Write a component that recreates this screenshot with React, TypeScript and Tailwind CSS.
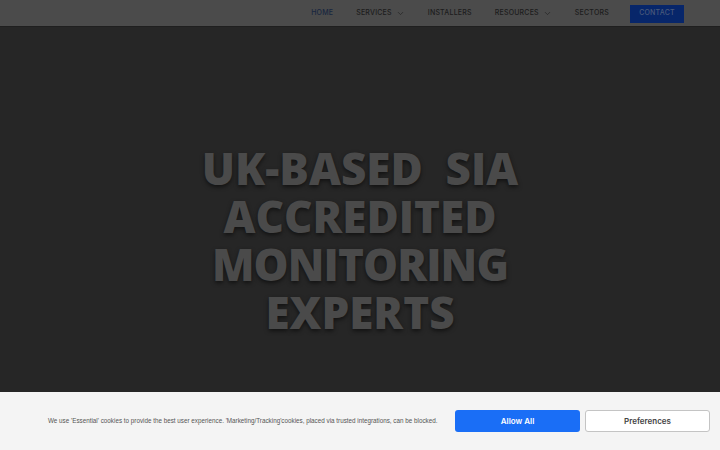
import { ChevronDown } from "lucide-react";

const NAV = [
  { label: "HOME", active: true },
  { label: "SERVICES", menu: true },
  { label: "INSTALLERS" },
  { label: "RESOURCES", menu: true },
  { label: "SECTORS" },
];

export default function App() {
  return (
    <div className="flex h-[450px] w-[720px] flex-col overflow-hidden bg-[#262626] font-['Inter',sans-serif]">
      <header className="flex h-[27px] shrink-0 items-center justify-end border-b border-[#1f1f1f] bg-[#4b4b4b] pr-[36px] pt-[1px]">
        <nav className="flex items-center gap-[23px]">
          {NAV.map((n) => (
            <span
              key={n.label}
              className={`flex items-center gap-[4px] text-[7px] font-medium tracking-[0.03em] ${
                n.active ? "text-[#17263f]" : "text-[#1c1c1c]"
              }`}
            >
              {n.label}
              {n.menu && <ChevronDown size={9} strokeWidth={1.6} className="text-[#1c1c1c]" />}
            </span>
          ))}
          <span className="ml-[-2px] flex h-[18px] w-[54px] items-center justify-center bg-[#07266a] text-[7px] font-medium tracking-[0.03em] text-[#4a5a7a]">
            CONTACT
          </span>
        </nav>
      </header>

      <main className="flex flex-1 items-start justify-center pt-[117px]">
        <h1 className="text-center font-['Open_Sans',sans-serif] text-[44px] font-extrabold uppercase leading-[48px] text-[#4a4a4a] [text-shadow:0_2px_4px_rgba(0,0,0,0.55)]">
          UK-BASED&nbsp; SIA
          <br />
          ACCREDITED
          <br />
          <span className="tracking-[-0.02em]">MONITORING</span>
          <br />
          EXPERTS
        </h1>
      </main>

      <footer className="flex h-[58px] shrink-0 items-center bg-[#f4f4f4] pl-[48px] pr-[10px]">
        <p className="flex-1 whitespace-nowrap font-['Liberation_Sans',sans-serif] text-[6.3px] text-[#555]">
          We use 'Essential' cookies to provide the best user experience. 'Marketing/Tracking'cookies, placed via trusted integrations, can be blocked.
        </p>
        <div className="flex gap-[5px]">
          <button className="h-[22px] w-[125px] rounded-[3px] bg-[#1a6ef6] text-[8px] font-semibold text-white">
            Allow All
          </button>
          <button className="h-[22px] w-[125px] rounded-[3px] border border-[#c4c4c4] bg-white text-[8px] font-semibold text-[#444]">
            Preferences
          </button>
        </div>
      </footer>
    </div>
  );
}
